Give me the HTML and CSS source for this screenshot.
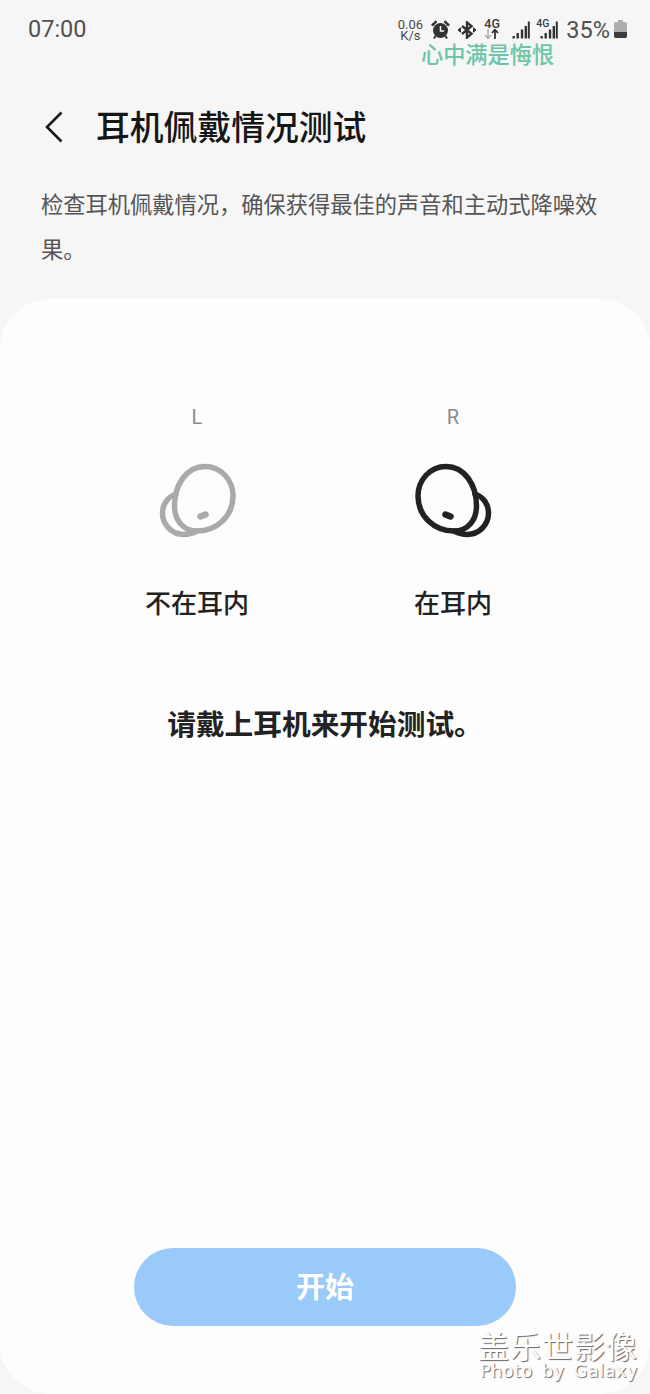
FILE: index.html
```html
<!DOCTYPE html>
<html lang="zh-CN">

<head>
    <meta charset="UTF-8">
    <meta name="viewport" content="width=device-width, initial-scale=1.0">
    <title>耳机佩戴情况测试</title>
    <link rel="stylesheet" href="styles.css">
</head>

<body>
    <svg class="defs" width="0" height="0">
        <symbol id="bud" viewBox="0 0 85 80">
            <path d="M21 34C12 37 7.500 45 7.500 53C7.500 65 17 74.500 29 74.500C34 74.500 38 73 42 71" />
            <path d="M50 6.500C66 6.500 78 20 78 36C78 56 62 71 42 71C28 71 19.500 60 19.500 46C19.500 24 32 6.500 50 6.500Z" />
            <path d="M45.500 56.500L50.500 54.500" stroke-width="6.500" />
        </symbol>
    </svg>

    <!-- status bar -->
    <div class="status">
        <span class="time">07:00</span>
        <div class="status-icons">
            <span class="speed">0.06<br>K/s</span>
            <svg class="ico-alarm" width="19" height="19" viewBox="0 0 19 19">
                <circle cx="9.500" cy="10.500" r="7.500" fill="#333" />
                <path d="M9.500 6v5h3.600" fill="none" stroke="#f6f6f6" stroke-width="1.500" />
                <path d="M0.500 4.800L4.800 0.800L5.800 2L1.800 6zM18.500 4.800L14.200 0.800L13.200 2L17.200 6z" fill="#333" stroke="#333" />
                <path d="M4.500 16L3 18.500M14.500 16L16 18.500" stroke="#333" stroke-width="2" fill="none" />
            </svg>
            <svg class="ico-bt" width="20" height="18" viewBox="0 0 20 18">
                <path d="M5 5L14.500 12.800L10 16.600V1.400L14.500 5.200L5 13" fill="none" stroke="#333" stroke-width="2.400" />
                <path d="M1 9L3.500 6.800V11.200zM19 9L16.500 6.800V11.200z" fill="#333" stroke="#333" />
            </svg>
            <div class="net">
                <span class="net-label">4G</span>
                <svg width="15" height="10" viewBox="0 0 15 10">
                    <path d="M4 0v9M1 6l3 3.400L7 6" fill="none" stroke="#aaa" stroke-width="1.400" />
                    <path d="M11 10V1M8 4l3-3.400L14 4" fill="none" stroke="#333" stroke-width="1.800" />
                </svg>
            </div>
            <svg class="ico-signal" width="18" height="18" viewBox="0 0 18 18">
                <path d="M0.500 15h2.400v2.400H0.500zM4.500 12h2.400v5.400H4.500zM8.800 8.500h2.400v8.900H8.800zM12.600 5h2.400v12.400h-2.400zM15.800 0.500h2v16.900h-2z" fill="#333" />
            </svg>
            <div class="sim2">
                <span class="sim2-label">4G</span>
                <svg width="18" height="18" viewBox="0 0 18 18">
                    <path d="M0.500 15h2.400v2.400H0.500zM4.500 12h2.400v5.400H4.500zM8.800 8.500h2.400v8.900H8.800zM12.600 5h2.400v12.400h-2.400zM15.800 0.500h2v16.900h-2z" fill="#333" />
                </svg>
            </div>
            <span class="percent">35%</span>
            <svg class="ico-battery" width="13" height="18" viewBox="0 0 13 18">
                <path d="M4 0h5v2H4z" fill="#adadad" />
                <rect x="0" y="2" width="13" height="16" rx="2" fill="#adadad" />
                <path d="M0 12h13v4a2 2 0 0 1-2 2H2a2 2 0 0 1-2-2z" fill="#3c3c3c" />
            </svg>
        </div>
    </div>

    <div class="top-note">心中满是悔恨</div>

    <div class="header">
        <svg class="back" width="18" height="32" viewBox="0 0 18 32">
            <path d="M16.500 1.500L2 16L16.500 30.500" fill="none" stroke="#1a1a1a" stroke-width="2.600" />
        </svg>
        <h1 class="title">耳机佩戴情况测试</h1>
    </div>

    <p class="desc">检查耳机佩戴情况，确保获得最佳的声音和主动式降噪效果。</p>

    <div class="card">
        <div class="buds">
            <div class="bud">
                <span class="side">L</span>
                <svg class="bud-icon off"><use href="#bud" /></svg>
                <span class="state">不在耳内</span>
            </div>
            <div class="bud">
                <span class="side">R</span>
                <svg class="bud-icon on"><use href="#bud" /></svg>
                <span class="state">在耳内</span>
            </div>
        </div>

        <p class="message">请戴上耳机来开始测试。</p>

        <button class="button">开始</button>
    </div>

    <!-- forum watermark -->
    <div class="watermark">
        <div class="wm-name">盖乐世影像</div>
        <div class="wm-sub">Photo by Galaxy</div>
    </div>
</body>

</html>
```

FILE: styles.css
```css
* {
    box-sizing: border-box;
}

body {
    position: relative;
    margin: 0;
    width: 650px;
    height: 1394px;
    overflow: hidden;
    display: flex;
    flex-direction: column;
    background-color: #f6f6f6;
    font-family: "Noto Sans CJK SC", Roboto, sans-serif;
}

.defs {
    position: absolute;
}

/* status bar */
.status {
    height: 56px;
    flex: none;
    display: flex;
    align-items: flex-start;
    justify-content: space-between;
    padding: 15px 23px 0 28px;
    color: #3c3c3c;
}

.time {
    font-family: Roboto, sans-serif;
    font-size: 23.500px;
    line-height: 28px;
    color: #505050;
}

.status-icons {
    display: flex;
    align-items: flex-start;
    padding-top: 4px;
}

.speed {
    width: 26px;
    margin-right: 8px;
    font-family: Roboto, sans-serif;
    font-size: 13px;
    line-height: 11px;
    text-align: center;
    color: #4a4a4a;
}

.ico-alarm {
    margin: 1px 7px 0 0;
}

.ico-bt {
    margin: 2px 7px 0 0;
}

.net {
    width: 15px;
    display: flex;
    flex-direction: column;
    margin-right: 13px;
}

.net-label,
.sim2-label {
    font-family: Roboto, sans-serif;
    font-weight: 500;
    font-size: 12.500px;
    line-height: 10px;
    text-align: center;
}

.ico-signal {
    margin: 2px 6px 0 0;
}

.sim2 {
    position: relative;
    width: 22px;
    height: 20px;
    margin-right: 8px;
    display: flex;
    justify-content: flex-end;
    padding-top: 2px;
}

.sim2-label {
    position: absolute;
    left: 0;
    top: 0;
    font-size: 10.500px;
}

.percent {
    font-family: Roboto, sans-serif;
    font-size: 23.500px;
    line-height: 22px;
    margin-right: 4px;
    color: #505050;
}

.ico-battery {
    margin-top: 1px;
}

.top-note {
    position: absolute;
    left: 421px;
    top: 38px;
    font-size: 22.200px;
    line-height: 30px;
    font-weight: 500;
    color: #6cc5a8;
}

/* title */
.header {
    display: flex;
    align-items: center;
    height: 60px;
    flex: none;
    margin-top: 39px;
    padding-left: 45px;
}

.back {
    margin: 4px 33px 0 0;
}

.title {
    margin: 0;
    font-size: 33.800px;
    font-weight: 500;
    color: #161616;
}

.desc {
    margin: 26px 0 28px;
    padding: 0 41px;
    font-size: 22.250px;
    line-height: 45px;
    color: #555;
}

/* card */
.card {
    flex: 1;
    display: flex;
    flex-direction: column;
    align-items: center;
    padding: 106px 0 68px;
    background-color: #fdfdfd;
    border-radius: 50px;
}

.buds {
    display: grid;
    grid-template-columns: 256px 256px;
}

.bud {
    display: flex;
    flex-direction: column;
    align-items: center;
}

.side {
    font-family: Roboto, sans-serif;
    font-size: 20px;
    line-height: 24px;
    color: #8a8a8a;
}

.bud-icon {
    width: 85px;
    height: 80px;
    margin-top: 31px;
    fill: none;
    stroke-width: 5.500;
    stroke-linecap: round;
}

.bud-icon.off {
    stroke: #aaa;
}

.bud-icon.on {
    stroke: #222;
    transform: scaleX(-1);
}

.state {
    margin-top: 44px;
    font-size: 26px;
    line-height: 36px;
    font-weight: 500;
    color: #222;
}

.message {
    margin: 83px 0 0;
    font-size: 28.700px;
    line-height: 40px;
    font-weight: 700;
    color: #222;
}

.button {
    width: 382px;
    height: 78px;
    margin-top: auto;
    padding: 0 0 4px;
    border: none;
    border-radius: 39px;
    background-color: #99caf9;
    color: #fff;
    font-family: inherit;
    font-size: 29px;
    font-weight: 700;
}

/* watermark */
.watermark {
    position: absolute;
    right: 12px;
    top: 1327px;
    color: #fff;
    text-shadow: 1px 1px 1px #666;
    text-align: right;
}

.wm-name {
    font-size: 31px;
    line-height: 36px;
    letter-spacing: 1px;
}

.wm-sub {
    font-family: "DejaVu Sans", sans-serif;
    font-size: 17.500px;
    line-height: 17px;
    letter-spacing: 0.600px;
    word-spacing: 3px;
}
```
